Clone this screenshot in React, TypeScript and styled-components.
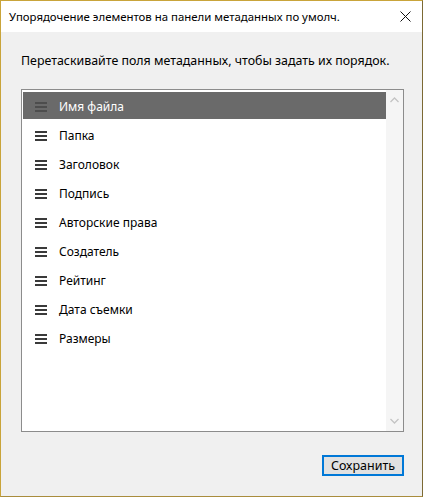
import styled, { createGlobalStyle } from 'styled-components';

const FIELDS = [
  'Имя файла',
  'Папка',
  'Заголовок',
  'Подпись',
  'Авторские права',
  'Создатель',
  'Рейтинг',
  'Дата съемки',
  'Размеры',
];

const GlobalStyle = createGlobalStyle`
  html, body {
    margin: 0;
    padding: 0;
    background: #f0f0f0;
  }

  * {
    box-sizing: border-box;
  }
`;

const DragHandle = ({ color }: { color: string }) => (
  <svg width="12" height="10" viewBox="0 0 12 10">
    <rect x="0" y="0" width="12" height="2" fill={color} />
    <rect x="0" y="4" width="12" height="2" fill={color} />
    <rect x="0" y="8" width="12" height="2" fill={color} />
  </svg>
);

const Chevron = ({ up }: { up?: boolean }) => (
  <svg width="9" height="6" viewBox="0 0 9 6">
    <path
      d={up ? 'M0.5 5 L4.5 1 L8.5 5' : 'M0.5 1 L4.5 5 L8.5 1'}
      stroke="#c4c4c4"
      strokeWidth="1.3"
      fill="none"
    />
  </svg>
);

const App = () => {
  return (
    <>
      <GlobalStyle />
      <Window>
        <TitleBar>
          <Title>Упорядочение элементов на панели метаданных по умолч.</Title>
          <CloseButton>
            <svg width="11" height="11" viewBox="0 0 11 11">
              <path d="M0.5 0.5 L10.5 10.5 M10.5 0.5 L0.5 10.5" stroke="#111" strokeWidth="1" />
            </svg>
          </CloseButton>
        </TitleBar>
        <Body>
          <Instruction>Перетаскивайте поля метаданных, чтобы задать их порядок.</Instruction>
          <ListBox>
            <Rows>
              {FIELDS.map((field, i) => (
                <Row key={field} selected={i === 0}>
                  <DragHandle color={i === 0 ? '#4d4d4d' : '#3a3a3a'} />
                  <RowLabel>{field}</RowLabel>
                </Row>
              ))}
            </Rows>
            <ScrollBar>
              <Chevron up />
              <Chevron />
            </ScrollBar>
          </ListBox>
          <Footer>
            <SaveButton>Сохранить</SaveButton>
          </Footer>
        </Body>
      </Window>
    </>
  );
};

export default App;

interface RowProps {
  selected?: boolean;
}

const Window = styled.div`
  display: flex;
  flex-direction: column;

  width: 423px;
  height: 497px;

  border: 1px solid #c9a43a;
  border-right-color: #7c6a34;
  border-bottom-color: #a98c3c;

  font-family: 'Noto Sans', 'Liberation Sans', sans-serif;
  font-size: 12px;
  color: #000;
`;

const TitleBar = styled.div`
  display: flex;
  align-items: center;
  justify-content: space-between;

  height: 31px;
  padding-left: 8px;

  background-color: #ffffff;
`;

const Title = styled.span`
  font-size: 11.4px;
  color: #000;
`;

const CloseButton = styled.div`
  display: flex;
  align-items: center;
  justify-content: center;

  width: 34px;
  height: 31px;
`;

const Body = styled.div`
  display: flex;
  flex-direction: column;
  flex: 1;

  padding: 20px 18px 0 20px;

  background-color: #f0f0f0;
`;

const Instruction = styled.div`
  height: 18px;
  line-height: 18px;

  font-size: 12.4px;
  color: #000;
`;

const ListBox = styled.div`
  display: flex;

  height: 343px;
  margin-top: 19px;

  background-color: #ffffff;
  border: 1px solid #8c8c8c;
`;

const Rows = styled.div`
  display: flex;
  flex-direction: column;
  flex: 1;

  padding: 2px 0 0 1px;
  gap: 2px;
`;

const Row = styled.div<RowProps>`
  display: flex;
  align-items: center;

  height: 27px;
  padding: 2px 0 0 12px;
  gap: 12px;

  background-color: ${(props) => (props.selected ? '#6a6a6a' : 'transparent')};
  color: ${(props) => (props.selected ? '#ffffff' : '#000000')};
`;

const RowLabel = styled.span`
  font-size: 12px;
`;

const ScrollBar = styled.div`
  display: flex;
  flex-direction: column;
  align-items: center;
  justify-content: space-between;

  width: 17px;
  padding: 7px 0 7px;

  background-color: #f5f5f5;
`;

const Footer = styled.div`
  display: flex;
  justify-content: flex-end;

  margin-top: 23px;
`;

const SaveButton = styled.button`
  width: 82px;
  height: 21px;
  padding: 0;

  background-color: #e1e1e1;
  border: 2px solid #0078d7;

  font-family: 'Noto Sans', 'Liberation Sans', sans-serif;
  font-size: 12.5px;
  line-height: 15px;
  color: #000;
`;
